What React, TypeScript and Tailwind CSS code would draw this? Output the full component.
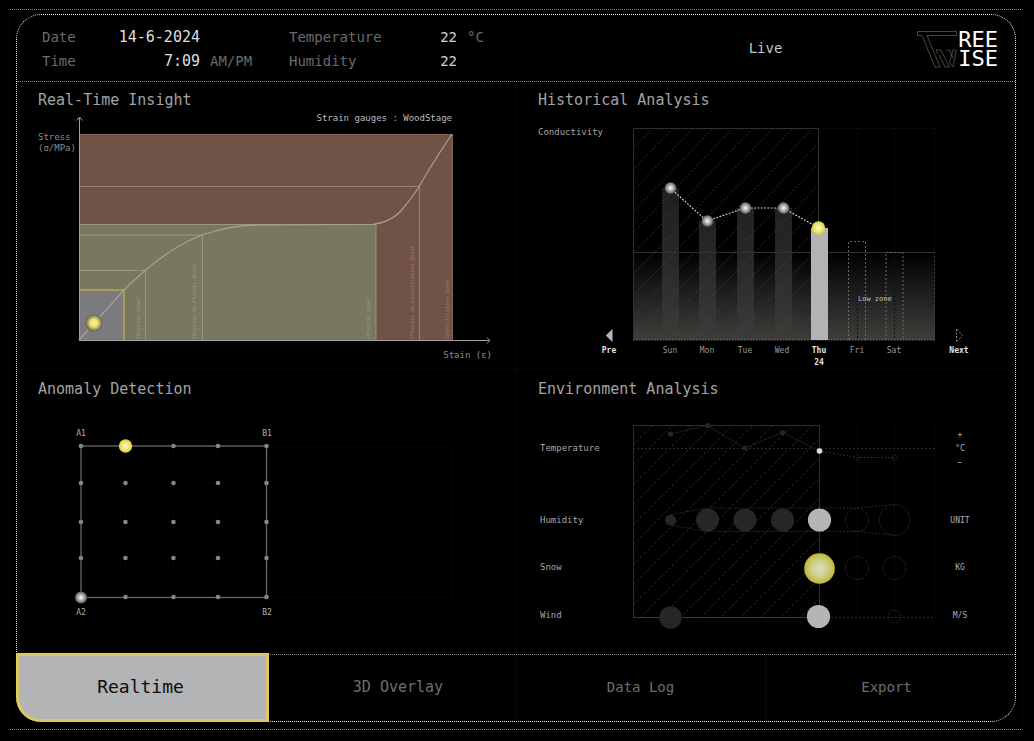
import type { ReactNode } from "react";

type Point = [number, number];

const DAY_X = [670, 707, 745, 782, 819, 857, 894];
const DAYS = ["Sun", "Mon", "Tue", "Wed", "Thu", "Fri", "Sat"];
const CONDUCTIVITY: Point[] = [
  [670, 188],
  [707, 221],
  [745, 208],
  [783, 208],
  [819, 228],
];
const SENSOR_X = [81, 125.5, 173.5, 218, 266.5];
const SENSOR_Y = [446, 483, 522, 558, 597];

function Glows() {
  return (
    <svg width="0" height="0" className="absolute" aria-hidden="true">
      <defs>
        <radialGradient id="glow-white">
          <stop offset="0" stopColor="#ffffff" />
          <stop offset="0.45" stopColor="#b4b4b4" />
          <stop offset="0.85" stopColor="#707070" />
          <stop offset="1" stopColor="#505050" stopOpacity="0.5" />
        </radialGradient>
        <radialGradient id="glow-yellow">
          <stop offset="0" stopColor="#fbf8cf" />
          <stop offset="0.35" stopColor="#f3eea4" />
          <stop offset="0.75" stopColor="#e6df50" />
          <stop offset="1" stopColor="#d3cb45" />
        </radialGradient>
        <radialGradient id="glow-snow">
          <stop offset="0" stopColor="#dcdccb" />
          <stop offset="0.55" stopColor="#d0cd88" />
          <stop offset="1" stopColor="#bcb83a" />
        </radialGradient>
        <radialGradient id="glow-strain">
          <stop offset="0" stopColor="#f6ee8c" />
          <stop offset="0.4" stopColor="#efe474" />
          <stop offset="0.75" stopColor="#99905f" />
          <stop offset="0.9" stopColor="#66645c" />
          <stop offset="1" stopColor="#66666a" stopOpacity="0" />
        </radialGradient>
        <linearGradient id="low-zone" x1="0" y1="0" x2="0" y2="1">
          <stop offset="0" stopColor="#000000" />
          <stop offset="0.5" stopColor="#202020" />
          <stop offset="1" stopColor="#403e3a" />
        </linearGradient>
        <linearGradient id="past-bar" gradientUnits="userSpaceOnUse" x1="0" y1="188" x2="0" y2="340">
          <stop offset="0" stopColor="#1f1f1f" />
          <stop offset="0.45" stopColor="#272727" />
          <stop offset="1" stopColor="#3c3c3b" />
        </linearGradient>
        <clipPath id="past-top">
          <rect x="633" y="128" width="186" height="212" />
        </clipPath>
        <clipPath id="past-bottom">
          <rect x="633" y="425" width="186" height="192" />
        </clipPath>
      </defs>
    </svg>
  );
}

function Panel({ title, className, children }: { title: string; className: string; children: ReactNode }) {
  return (
    <section className={className}>
      <h2 className="pl-[21px] text-[15px] leading-5 text-[#a3a3a3]">{title}</h2>
      {children}
    </section>
  );
}

function Reading({ label, value, unit, wide }: { label: string; value: string; unit?: string; wide?: boolean }) {
  return (
    <div className="flex h-6 items-center">
      <dt className={wide ? "w-24 text-[14px] text-[#6a6a6a]" : "w-16 text-[14px] text-[#6a6a6a]"}>{label}</dt>
      <dd className="flex items-center">
        <span className={wide ? "w-[72px] text-right text-[14px] text-[#d0d0d0]" : "w-[94px] text-right text-[15px] text-[#dedede]"}>
          {value}
        </span>
        {unit && <span className="pl-[10px] text-[14px] text-[#6a6a6a]">{unit}</span>}
      </dd>
    </div>
  );
}

function Logo() {
  return (
    <div className="flex items-center gap-px pt-[2px]">
      <svg viewBox="0 0 40 37" className="h-[37px] w-10" fill="none" stroke="#5c574a" strokeWidth="0.8" aria-hidden="true">
        <path d="M.5 .5H39.500V4.500H10L23 36H18L5 4.500H.5Z" />
        <path d="M20.500 23L19 19H24L32.500 36H28L22 24" />
        <path d="M29.500 19H32.500L36 27.500M36 19H39.500L36 36L32.500 31.500Z" />
      </svg>
      <p className="text-[22px] leading-[19px] text-white">
        REE
        <br />
        ISE
      </p>
    </div>
  );
}

function ZoneLabel({ x, color = "#a09c86", children }: { x: number; color?: string; children: string }) {
  return (
    <text transform={`translate(${x} 339) rotate(-90)`} fontSize="5" fill={color}>
      {children}
    </text>
  );
}

function StrainChart() {
  return (
    <svg viewBox="17 110 499 259" className="block w-full" role="img" aria-label="Stress over strain">
      <rect x="79" y="134" width="374" height="206" fill="#705246" />
      <rect x="79" y="224" width="297" height="116" fill="#787860" />
      <g stroke="#85856b" strokeWidth="0.5" strokeOpacity="0.35">
        {Array.from({ length: 23 }, (_, i) => (
          <path key={i} d={`M${92 + i * 12.3} 225V340`} />
        ))}
        {Array.from({ length: 10 }, (_, i) => (
          <path key={i} d={`M79 ${236 + i * 11}H376`} />
        ))}
      </g>
      <rect x="79" y="290" width="45" height="50" fill="#7b7a7f" />
      <path d="M79 290H124V340" fill="none" stroke="#b5ab50" strokeWidth="1.5" />
      <g fill="none" stroke="#a39e8c" strokeOpacity="0.8">
        <path d="M79 270.500H145.500V340M79 235H202.500V340" />
        <path d="M79 224.500H376V340" />
        <path d="M79 186.500H419.500V340" stroke="#a78a7b" />
        <path d="M79 134.500H452.500V340" strokeDasharray="1 1" stroke="#98857b" />
      </g>
      <path
        d="M79 340L124 290C150 264 178 244 202 235C222 228 238 225 260 225L372 224.500C386 223 394 218 400 212C407 204 413 196 419 187C428 170 440 152 452 134"
        fill="none"
        stroke="#aaa292"
        strokeWidth="1.200"
      />
      <g fill="none" stroke="#a0a0a0">
        <path d="M79.500 340.500V118M76.500 120.500L79.500 117L82.500 120.500" />
        <path d="M79 340.500H489M487 337.500L490 340.500L487 343.500" />
      </g>
      <circle cx="94" cy="323" r="9" fill="url(#glow-strain)" />
      <ZoneLabel x={140}>(Elastic Zone)</ZoneLabel>
      <ZoneLabel x={196}>(Elastic to Plastic Zone)</ZoneLabel>
      <ZoneLabel x={370}>(Plastic Zone)</ZoneLabel>
      <ZoneLabel x={414} color="#9c8073">(Plastic to Densification Zone)</ZoneLabel>
      <ZoneLabel x={449} color="#9c8073">(Densification Zone)</ZoneLabel>
      <g fontSize="9" fill="#8a8a8a">
        <text x="38" y="140">Stress</text>
        <text x="38" y="151">(σ/MPa)</text>
        <text x="492" y="358" textAnchor="end">Stain (ε)</text>
        <text x="452" y="121" textAnchor="end" fill="#bdbdbd">Strain gauges : WoodStage</text>
      </g>
    </svg>
  );
}

function ConductivityChart() {
  return (
    <svg viewBox="627 110 314 259" className="block w-full" role="img" aria-label="Conductivity by day">
      <rect x="633" y="252" width="302" height="88" fill="url(#low-zone)" />
      <g stroke="#101010" strokeDasharray="2 2">
        <path d="M819 128.500H935M857.500 128V340M894.500 128V340M934.500 128V252" fill="none" />
      </g>
      {CONDUCTIVITY.slice(0, 4).map(([x, y]) => (
        <rect key={x} x={x - 8} y={y} width="17" height={340 - y} fill="url(#past-bar)" />
      ))}
      <g clipPath="url(#past-top)" stroke="#55534a" strokeOpacity="0.7" strokeWidth="0.8" strokeDasharray="2 2">
        {Array.from({ length: 20 }, (_, i) => (
          <path key={i} d={`M633 ${149 + i * 21}L${653 + i * 20} 128`} />
        ))}
      </g>
      <path d="M633.500 340V128.500H818.500V340" fill="none" stroke="#31302c" />
      <path d="M633 252.500H935" stroke="#303030" />
      <path d="M633 340H935" stroke="#77756a" strokeDasharray="1.500 1.500" />
      <path d="M934.500 252V340" stroke="#3a3a3a" strokeDasharray="2 2" />
      <rect x="811" y="228" width="17" height="112" fill="#b3b3b5" />
      <g fill="none" stroke="#707070" strokeDasharray="2 2" strokeWidth="0.9">
        <path d="M848.500 340V241.500H865.500V340" />
        <path d="M886 340V252.500H903V340" />
      </g>
      <polyline points={CONDUCTIVITY.join(" ")} fill="none" stroke="#cfcfcf" strokeWidth="1.200" strokeDasharray="1.800 1.500" />
      {CONDUCTIVITY.slice(0, 4).map(([x, y]) => (
        <circle key={x} cx={x + 0.5} cy={y} r="6" fill="url(#glow-white)" />
      ))}
      <circle cx="818.500" cy="228" r="6.800" fill="url(#glow-yellow)" />
      <text x="858" y="301" fontSize="7" fill="#c4c4c4">Low zone</text>
      <g fontSize="8" fill="#9a9a9a" textAnchor="middle">
        {DAYS.map((day, i) => (
          <text key={day} x={DAY_X[i]} y="353" fontWeight={day === "Thu" ? "bold" : "normal"} fill={day === "Thu" ? "#e4e4e4" : "#9a9a9a"}>
            {day}
          </text>
        ))}
        <text x="819" y="365" fontWeight="bold" fill="#e4e4e4">24</text>
      </g>
    </svg>
  );
}

function SensorGrid() {
  return (
    <svg viewBox="17 410 499 244" className="block w-full" role="img" aria-label="Sensor grid">
      <g stroke="#121212" strokeDasharray="2 2" fill="none">
        <path d="M267 446H452V597H267" />
        <path d="M125.500 446V597M173.500 446V597M218 446V597M81 483H267M81 522H267M81 558H267" strokeOpacity="0.5" />
      </g>
      <rect x="81" y="446" width="185.500" height="151.500" fill="none" stroke="#686868" strokeWidth="1.300" />
      {SENSOR_Y.flatMap((y) =>
        SENSOR_X.map((x) => <circle key={`${x}-${y}`} cx={x} cy={y} r="2.300" fill="#868686" />),
      )}
      <circle cx="125.500" cy="446" r="6.700" fill="url(#glow-yellow)" />
      <circle cx="81" cy="597.500" r="6.200" fill="url(#glow-white)" />
      <g fontSize="8" fill="#b0b0b0" textAnchor="middle">
        <text x="81" y="436">A1</text>
        <text x="267" y="436">B1</text>
        <text x="81" y="615">A2</text>
        <text x="267" y="615">B2</text>
      </g>
    </svg>
  );
}

function EnvironmentChart() {
  return (
    <svg viewBox="517 410 498 244" className="block w-full" role="img" aria-label="Temperature, humidity, snow and wind by day">
      <path d="M857.500 426V617M894.500 426V617M934.500 426V617" stroke="#101010" strokeDasharray="2 2" />
      <path d="M633.500 617V425.500H819.500V617" fill="none" stroke="#2f2f2f" />
      <path d="M633 617.500H819" stroke="#3c3c3c" />
      <path d="M633 448.500H935M819 617.500H935" stroke="#2a2a2a" strokeDasharray="2 2" />
      <path d="M670 434L707 425.500L745 448L782.500 432.500L819 451" fill="none" stroke="#1e1e1e" />
      <path d="M819 451L857 457.500H894" fill="none" stroke="#3a3a3a" strokeDasharray="1.500 2" />
      <path d="M670 514.500L707 508H819M670 525L707 531.500H819" fill="none" stroke="#191919" />
      <path d="M819 508H857L894 504.500M819 531.500H857L894 535" fill="none" stroke="#333333" strokeDasharray="1.500 2" />
      <g fill="#262626">
        <circle cx="670.500" cy="434" r="2.600" />
        <circle cx="707.500" cy="425.500" r="2.600" />
        <circle cx="745" cy="448" r="2.600" />
        <circle cx="782.500" cy="432.500" r="2.600" />
        <circle cx="670.500" cy="520" r="5.500" />
        <circle cx="707.500" cy="520" r="11.500" />
        <circle cx="745" cy="520" r="11.500" />
        <circle cx="782.500" cy="520" r="11.500" />
        <circle cx="670.500" cy="617.500" r="11.300" />
      </g>
      <g clipPath="url(#past-bottom)" stroke="#3c3b37" strokeOpacity="0.85" strokeWidth="0.8" strokeDasharray="3 2">
        {Array.from({ length: 19 }, (_, i) => (
          <path key={i} d={`M633 ${445 + i * 20}L${653 + i * 20} 425`} />
        ))}
      </g>
      <g fill="none" stroke="#292929" strokeWidth="0.9" strokeDasharray="2 1">
        <circle cx="857" cy="457.500" r="2.700" />
        <circle cx="894.500" cy="457.500" r="2.700" />
        <circle cx="857" cy="520" r="11.500" />
        <circle cx="894.500" cy="520" r="15.300" />
        <circle cx="857" cy="568" r="11.500" />
        <circle cx="894.500" cy="568" r="11.500" />
        <circle cx="894.500" cy="616.500" r="6.300" />
      </g>
      <circle cx="819.500" cy="451" r="2.800" fill="#dddddd" />
      <circle cx="819.500" cy="520" r="11.600" fill="#b5b5b6" />
      <circle cx="819.500" cy="568.500" r="15.300" fill="url(#glow-snow)" />
      <circle cx="818.500" cy="616.500" r="11.600" fill="#b5b5b6" />
      <g fontSize="9" fill="#a6a6a6">
        <text x="540" y="451">Temperature</text>
        <text x="540" y="523">Humidity</text>
        <text x="540" y="570">Snow</text>
        <text x="540" y="618">Wind</text>
      </g>
      <g fontSize="8" fill="#b0b0b0" textAnchor="middle">
        <text x="960" y="437">+</text>
        <text x="960" y="451">°C</text>
        <text x="960" y="465">−</text>
        <text x="960" y="523">UNIT</text>
        <text x="960" y="570">KG</text>
        <text x="960" y="618">M/S</text>
      </g>
    </svg>
  );
}

export default function App() {
  return (
    <div
      className="min-h-screen bg-black pt-[9px] pr-[11px] pb-[11px] pl-[9px]"
      style={{ fontFamily: '"DejaVu Sans Mono", "Liberation Mono", monospace' }}
    >
      <Glows />
      <div className="border border-dotted border-x-[#101010] border-y-[#868686] px-[6px] pt-1 pb-[7px]">
        <div className="rounded-[25px] border border-dotted border-[#f0f0f0]">
          <header className="grid grid-cols-2 border-b border-dotted border-[#858585]">
            <dl className="grid grid-cols-2 pt-[10px] pb-2 pl-[25px]">
              <div>
                <Reading label="Date" value="14-6-2024" />
                <Reading label="Time" value="7:09" unit="AM/PM" />
              </div>
              <div className="pl-[10px]">
                <Reading wide label="Temperature" value="22" unit="°C" />
                <Reading wide label="Humidity" value="22" />
              </div>
            </dl>
            <div className="grid grid-cols-3 items-center">
              <span />
              <span className="text-center text-[14px] text-[#c4c4c4]">Live</span>
              <div className="flex justify-end pr-[17px]">
                <Logo />
              </div>
            </div>
          </header>

          <main className="grid grid-cols-2">
            <Panel title="Real-Time Insight" className="border-b border-dotted border-[#101010] pt-2">
              <StrainChart />
            </Panel>
            <Panel title="Historical Analysis" className="border-b border-l border-dotted border-[#101010] pt-2">
              <div className="grid grid-cols-[110px_1fr_74px]">
                <div className="flex flex-col justify-between pt-4 pb-3">
                  <span className="pl-[21px] text-[9px] leading-3 text-[#a6a6a6]">Conductivity</span>
                  <button type="button" className="flex w-9 flex-col items-center gap-[2px] self-end text-[8px] leading-3 font-bold text-[#e4e4e4]">
                    <svg viewBox="0 0 8 15" className="h-[15px] w-2" aria-hidden="true">
                      <path d="M7.500 1V14L.8 7.500Z" fill="#b8b8b8" />
                    </svg>
                    Pre
                  </button>
                </div>
                <ConductivityChart />
                <div className="flex flex-col justify-end pb-3">
                  <button type="button" className="flex w-9 flex-col items-center gap-[2px] text-[8px] leading-3 font-bold text-[#e4e4e4]">
                    <svg viewBox="0 0 8 15" className="h-[15px] w-2" aria-hidden="true">
                      <path d="M1.500 1V14L7.500 7.500Z" fill="none" stroke="#8c8c8c" strokeDasharray="2 1.500" />
                    </svg>
                    Next
                  </button>
                </div>
              </div>
            </Panel>
            <Panel title="Anomaly Detection" className="pt-[9px]">
              <div className="pt-[11px]">
                <SensorGrid />
              </div>
            </Panel>
            <Panel title="Environment Analysis" className="border-l border-dotted border-[#101010] pt-[9px]">
              <div className="pt-[11px]">
                <EnvironmentChart />
              </div>
            </Panel>
          </main>

          <nav className="grid h-[67px] grid-cols-[252fr_246fr_250fr_250fr] border-t border-dotted border-[#858585] text-[#6e6e6e]">
            <button
              type="button"
              aria-current="page"
              className="-mt-[2px] -mb-px -ml-px rounded-bl-[25px] border-[3px] border-[#dcc85c] bg-[#b2b4b6] pr-1 pb-[2px] text-[18px] text-[#0c0c0c]"
            >
              Realtime
            </button>
            <button type="button" className="pb-[2px] pl-3 text-[15px]">3D Overlay</button>
            <button type="button" className="border-l border-dotted border-[#141414] pb-[2px] text-[14px]">Data Log</button>
            <button type="button" className="border-l border-dotted border-[#141414] pr-2 pb-[2px] text-[14px]">Export</button>
          </nav>
        </div>
      </div>
    </div>
  );
}
